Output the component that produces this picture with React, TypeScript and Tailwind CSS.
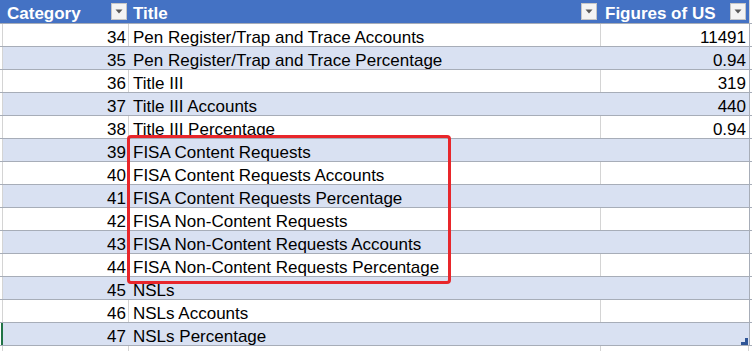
import React from 'react';

interface Row {
  n: number;
  title: string;
  value: string;
}

const rows: Row[] = [
  { n: 34, title: 'Pen Register/Trap and Trace Accounts', value: '11491' },
  { n: 35, title: 'Pen Register/Trap and Trace Percentage', value: '0.94' },
  { n: 36, title: 'Title III', value: '319' },
  { n: 37, title: 'Title III Accounts', value: '440' },
  { n: 38, title: 'Title III Percentage', value: '0.94' },
  { n: 39, title: 'FISA Content Requests', value: '' },
  { n: 40, title: 'FISA Content Requests Accounts', value: '' },
  { n: 41, title: 'FISA Content Requests Percentage', value: '' },
  { n: 42, title: 'FISA Non-Content Requests', value: '' },
  { n: 43, title: 'FISA Non-Content Requests Accounts', value: '' },
  { n: 44, title: 'FISA Non-Content Requests Percentage', value: '' },
  { n: 45, title: 'NSLs', value: '' },
  { n: 46, title: 'NSLs Accounts', value: '' },
  { n: 47, title: 'NSLs Percentage', value: '' },
];

function FilterButton() {
  return (
    <span className="flex h-[17px] w-[16px] items-center justify-center border border-[#c6c6c6] bg-[#f4f4f4]">
      <svg width="8" height="5" viewBox="0 0 8 5">
        <path d="M0.5 0.5 L7.5 0.5 L4 4.5 Z" fill="#595959" />
      </svg>
    </span>
  );
}

export default function App() {
  return (
    <div
      className="relative h-[351px] w-[752px] overflow-hidden bg-white text-[17px] text-black"
      style={{ fontFamily: '"Liberation Sans", Arial, sans-serif' }}
    >
      {/* Header */}
      <div className="flex h-[24px] border-b border-[#a7adb8]">
        <div className="w-[3px] bg-[#4472c4]" />
        <div className="flex w-[126px] items-center justify-between bg-[#4472c4] pl-[4px] pr-[2px] font-bold text-white">
          <span className="translate-y-[2px] leading-none">Category</span>
          <FilterButton />
        </div>
        <div className="flex w-[472px] items-center justify-between bg-[#4472c4] pl-[4px] pr-[4px] font-bold text-white">
          <span className="translate-y-[2px] leading-none">Title</span>
          <FilterButton />
        </div>
        <div className="flex w-[148px] items-center justify-between bg-[#4472c4] pl-[4px] pr-[3px] font-bold text-white">
          <span className="translate-y-[2px] leading-none">Figures of US</span>
          <FilterButton />
        </div>
        <div className="flex-1 border-l border-[#d4d4d4] bg-white" />
      </div>

      {/* Body rows */}
      {rows.map((r, i) => {
        const band = i % 2 === 1;
        const bg = band ? 'bg-[#d9e1f2]' : 'bg-white';
        const cellBorder = band ? 'border-[#d9e1f2]' : 'border-[#d4d4d4]';
        const last = i === rows.length - 1;
        return (
          <div key={r.n} className="flex h-[23px] border-b border-[#a7adb8]">
            <div className="w-[3px] border-r border-[#d4d4d4] bg-white">
              {last && <div className="ml-[1px] h-full w-[2px] bg-[#217346]" />}
            </div>
            <div className={`flex w-[126px] items-center justify-end border-r pr-[2px] ${bg} ${cellBorder}`}>
              <span className="translate-y-[2px] leading-none">{r.n}</span>
            </div>
            <div className={`flex w-[472px] items-center border-r pl-[4px] ${bg} ${cellBorder}`}>
              <span className="translate-y-[2px] leading-none">{r.title}</span>
            </div>
            <div className={`relative flex w-[148px] items-center justify-end pr-[3px] ${bg}`}>
              <span className="translate-y-[2px] leading-none">{r.value}</span>
              {last && (
                <svg className="absolute bottom-[0px] right-[1px]" width="7" height="7" viewBox="0 0 7 7">
                  <path d="M7 0 L7 7 L0 7 L0 4 L4 4 L4 0 Z" fill="#2f5597" />
                </svg>
              )}
            </div>
            <div className="flex-1 border-l border-[#a7adb8] bg-white" />
          </div>
        );
      })}

      {/* Partial next row */}
      <div className="flex h-[10px]">
        <div className="w-[3px] border-r border-[#d4d4d4]" />
        <div className="w-[126px] border-r border-[#d4d4d4]" />
        <div className="w-[472px] border-r border-[#d4d4d4]" />
        <div className="w-[148px] border-r border-[#d4d4d4]" />
      </div>

      {/* Red highlight box */}
      <div className="pointer-events-none absolute left-[127px] top-[135px] h-[149px] w-[324px] rounded-[4px] border-[3px] border-[#e8262b]" />
    </div>
  );
}
